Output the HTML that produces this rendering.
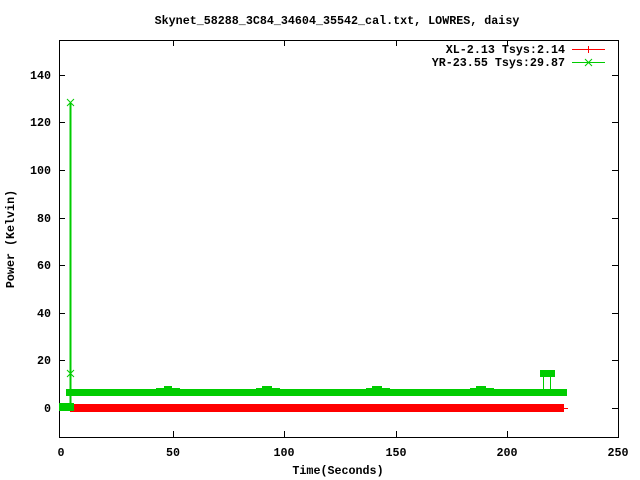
<!DOCTYPE html>
<html><head><style>body{margin:0;background:#fff}svg{display:block}text{font-family:"Liberation Mono",monospace;font-size:11.7px;font-weight:bold;fill:#000}</style></head><body>
<svg width="640" height="480" xmlns="http://www.w3.org/2000/svg">
<rect width="640" height="480" fill="#fff"/>
<text x="337" y="24" text-anchor="middle">Skynet_58288_3C84_34604_35542_cal.txt, LOWRES, daisy</text>
<g stroke="#000" stroke-width="1" fill="none">
<rect x="59.5" y="40.5" width="559" height="397"/>
<path d="M59 408.5h6M612 408.5h6M59 360.5h6M612 360.5h6M59 313.5h6M612 313.5h6M59 265.5h6M612 265.5h6M59 218.5h6M612 218.5h6M59 170.5h6M612 170.5h6M59 122.5h6M612 122.5h6M59 75.5h6M612 75.5h6"/>
<path d="M173.5 437v-6M173.5 40v6M284.5 437v-6M284.5 40v6M396.5 437v-6M396.5 40v6M507.5 437v-6M507.5 40v6"/>
</g>
<g text-anchor="end">
<text x="51" y="412">0</text><text x="51" y="364">20</text><text x="51" y="317">40</text><text x="51" y="269">60</text><text x="51" y="222">80</text><text x="51" y="174">100</text><text x="51" y="126">120</text><text x="51" y="79">140</text>
</g>
<g text-anchor="middle">
<text x="61" y="456">0</text><text x="173" y="456">50</text><text x="284" y="456">100</text><text x="396" y="456">150</text><text x="507" y="456">200</text><text x="618" y="456">250</text>
<text x="338" y="474">Time(Seconds)</text>
</g>
<text transform="translate(14,239) rotate(-90)" text-anchor="middle">Power (Kelvin)</text>
<g text-anchor="end"><text x="565" y="53">XL-2.13 Tsys:2.14</text><text x="565" y="66">YR-23.55 Tsys:29.87</text></g>
<path d="M572 49.5h33M588.5 46v7" stroke="#f00"/>
<path d="M572 62.5h33M585 59l7 7M592 59l-7 7" stroke="#0c0"/>
<rect x="70" y="404" width="494" height="8" fill="#f00"/>
<path d="M564 408.5h4" stroke="#f00"/>
<rect x="59" y="403" width="15" height="8" fill="#0c0"/>
<rect x="66" y="389" width="501" height="7" fill="#0c0"/>
<path d="M156 388h8v-2h8v2h8v8h-24zM256 388h6v-2h10v2h8v8h-24zM366 388h6v-2h10v2h8v8h-24zM470 388h6v-2h10v2h8v8h-24z" fill="#0c0"/>
<path d="M70.5 103v305" stroke="#0c0" stroke-width="2"/>
<path d="M67 99l7 7M74 99l-7 7M67 370l7 7M74 370l-7 7" stroke="#0c0"/>
<rect x="540" y="370" width="15" height="7" fill="#0c0"/>
<path d="M543.5 377v12M550.5 377v12" stroke="#0c0"/>
</svg>
</body></html>
